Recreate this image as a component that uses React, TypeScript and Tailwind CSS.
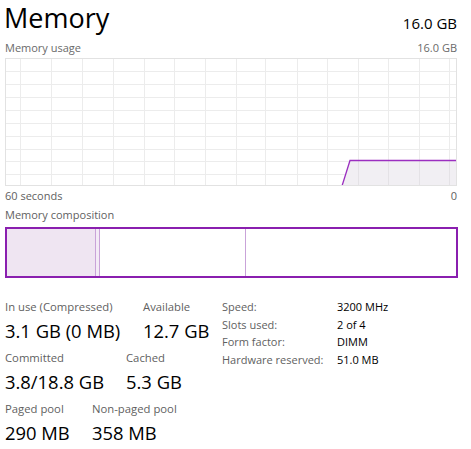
import React from "react";

const font = { fontFamily: '"Open Sans", "Noto Sans", sans-serif' };

function UsageGraph() {
  const w = 452;
  const h = 128;
  const vx = [15, 46, 77, 108, 139, 169, 200, 231, 260, 292, 322, 353, 383, 414, 444];
  const hy = [13, 26, 39, 52, 65, 78, 91, 103, 116];
  return (
    <svg width={w} height={h} className="block">
      <rect x="0.5" y="0.5" width={w - 1} height={h - 1} fill="#ffffff" stroke="#e2e2e2" />
      {vx.map((x) => (
        <line key={"v" + x} x1={x + 0.5} y1={0} x2={x + 0.5} y2={h} stroke="#ececec" strokeWidth="1" />
      ))}
      {hy.map((y) => (
        <line key={"h" + y} x1={0} y1={y + 0.5} x2={w} y2={y + 0.5} stroke="#ececec" strokeWidth="1" />
      ))}
      <polygon points={`337,${h} 345,102.5 ${w},102.5 ${w},${h}`} fill="#f1eff3" />
      {[353, 383, 414, 444].map((x) => (
        <line key={"f" + x} x1={x + 0.5} y1={103} x2={x + 0.5} y2={h} stroke="#e4e2e6" strokeWidth="1" />
      ))}
      <polyline points={`337,${h} 345,102.5 ${w},102.5`} fill="none" stroke="#9b2fc0" strokeWidth="1.3" />
      <rect x="0.5" y="0.5" width={w - 1} height={h - 1} fill="none" stroke="#e2e2e2" />
    </svg>
  );
}

function Composition() {
  return (
    <div className="flex w-[453px] h-[51px] border-2 border-[#8a1faf] bg-white">
      <div className="w-[88px] h-full bg-[#efe5f2]"></div>
      <div className="w-[1px] h-full bg-[#c9a3d9]"></div>
      <div className="w-[3px] h-full bg-[#f3ebf6]"></div>
      <div className="w-[1px] h-full bg-[#c9a3d9]"></div>
      <div className="w-[145px] h-full bg-white"></div>
      <div className="w-[1px] h-full bg-[#c9a3d9]"></div>
      <div className="flex-1 h-full bg-white"></div>
    </div>
  );
}

function Stat({ label, value, className }: { label: string; value: string; className?: string }) {
  return (
    <div className={"flex flex-col " + (className ?? "")}>
      <div className="text-[11.3px] leading-[16px] text-[#5f5f5f]">{label}</div>
      <div className="text-[18.4px] leading-[24px] text-black mt-[4px]">{value}</div>
    </div>
  );
}

export default function App() {
  return (
    <div className="w-[471px] h-[449px] bg-white overflow-hidden" style={font}>
      <div className="pl-[5px] pr-[14px]">
        <div className="flex justify-between items-end h-[36px]">
          <div className="text-[27px] leading-[36px] text-black -ml-[1px]">Memory</div>
          <div className="text-[15px] leading-[20px] text-black mb-[3px]">16.0 GB</div>
        </div>
        <div className="flex justify-between items-end h-[20px] text-[11px] leading-[16px] text-[#6a6a6a]">
          <div>Memory usage</div>
          <div>16.0 GB</div>
        </div>
        <div className="mt-[2px]">
          <UsageGraph />
        </div>
        <div className="flex justify-between text-[11px] leading-[16px] text-[#5f5f5f] mt-[2px]">
          <div>60 seconds</div>
          <div>0</div>
        </div>
        <div className="text-[11px] leading-[16px] text-[#5f5f5f] mt-[3px]">Memory composition</div>
        <div className="mt-[4px]">
          <Composition />
        </div>

        <div className="flex mt-[21px]">
          <div className="flex flex-col w-[217px]">
            <div className="flex">
              <Stat label="In use (Compressed)" value="3.1 GB (0 MB)" className="w-[138px]" />
              <Stat label="Available" value="12.7 GB" />
            </div>
            <div className="flex mt-[7px]">
              <Stat label="Committed" value="3.8/18.8 GB" className="w-[121px]" />
              <Stat label="Cached" value="5.3 GB" />
            </div>
            <div className="flex mt-[7px]">
              <Stat label="Paged pool" value="290 MB" className="w-[87px]" />
              <Stat label="Non-paged pool" value="358 MB" />
            </div>
          </div>
          <div className="flex flex-col text-[11px] leading-[17.6px] mt-[-1px]">
            {[
              ["Speed:", "3200 MHz"],
              ["Slots used:", "2 of 4"],
              ["Form factor:", "DIMM"],
              ["Hardware reserved:", "51.0 MB"],
            ].map(([k, v]) => (
              <div key={k} className="flex">
                <div className="w-[115px] text-[#5f5f5f]">{k}</div>
                <div className="text-black">{v}</div>
              </div>
            ))}
          </div>
        </div>
      </div>
    </div>
  );
}
